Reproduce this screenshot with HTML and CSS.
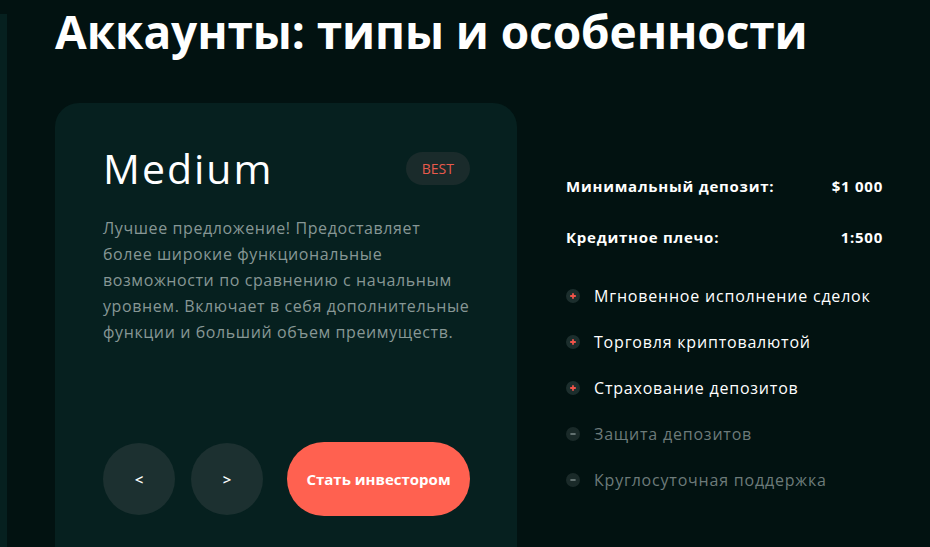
FILE: index.html
```html
<!DOCTYPE html>
<html lang="ru">
<head>
<meta charset="utf-8">
<title>Аккаунты</title>
<link rel="stylesheet" href="styles.css">
</head>
<body>
<div class="page">
  <div class="peek"></div>
  <main class="content">
    <h1 class="title">Аккаунты: типы и особенности</h1>
    <div class="row">
      <section class="card">
        <div class="card-head">
          <h2 class="card-name">Medium</h2>
          <span class="badge">BEST</span>
        </div>
        <p class="card-text">Лучшее предложение! Предоставляет<br>более широкие функциональные<br>возможности по сравнению с начальным<br>уровнем. Включает в себя дополнительные<br>функции и больший объем преимуществ.</p>
        <div class="card-actions">
          <button class="nav-btn">&lt;</button>
          <button class="nav-btn">&gt;</button>
          <button class="cta">Стать инвестором</button>
        </div>
      </section>
      <aside class="info">
        <div class="param"><span>Минимальный депозит:</span><span>$1 000</span></div>
        <div class="param"><span>Кредитное плечо:</span><span>1:500</span></div>
        <ul class="features">
          <li class="feat on"><span class="ico"><svg viewBox="0 0 14 14" width="14" height="14"><circle cx="7" cy="7" r="7" fill="#1c2e2d"/><path d="M7 4.2v5.6M4.2 7h5.6" stroke="#f0544a" stroke-width="1.8"/></svg></span>Мгновенное исполнение сделок</li>
          <li class="feat on"><span class="ico"><svg viewBox="0 0 14 14" width="14" height="14"><circle cx="7" cy="7" r="7" fill="#1c2e2d"/><path d="M7 4.2v5.6M4.2 7h5.6" stroke="#f0544a" stroke-width="1.8"/></svg></span>Торговля криптовалютой</li>
          <li class="feat on"><span class="ico"><svg viewBox="0 0 14 14" width="14" height="14"><circle cx="7" cy="7" r="7" fill="#1c2e2d"/><path d="M7 4.2v5.6M4.2 7h5.6" stroke="#f0544a" stroke-width="1.8"/></svg></span>Страхование депозитов</li>
          <li class="feat off"><span class="ico"><svg viewBox="0 0 14 14" width="14" height="14"><circle cx="7" cy="7" r="7" fill="#1a2a29"/><path d="M4.4 7h5.2" stroke="#6b7a79" stroke-width="1.8"/></svg></span>Защита депозитов</li>
          <li class="feat off"><span class="ico"><svg viewBox="0 0 14 14" width="14" height="14"><circle cx="7" cy="7" r="7" fill="#1a2a29"/><path d="M4.4 7h5.2" stroke="#6b7a79" stroke-width="1.8"/></svg></span>Круглосуточная поддержка</li>
        </ul>
      </aside>
    </div>
  </main>
</div>
</body>
</html>
```
FILE: styles.css
```css
* { box-sizing: border-box; }
html, body { margin: 0; padding: 0; }
body {
  background: #021211;
  font-family: "Open Sans", "Noto Sans", sans-serif;
  color: #ffffff;
  width: 930px;
  height: 547px;
  overflow: hidden;
}
.page {
  display: flex;
  height: 547px;
}
.peek {
  width: 7px;
  margin-top: 14px;
  background: #06201f;
  flex: none;
}
.content {
  margin-left: 48px;
  flex: 1;
}
.title {
  margin: 0;
  font-size: 46px;
  line-height: 63px;
  font-weight: 700;
  letter-spacing: -0.1px;
  white-space: nowrap;
}
.row {
  display: flex;
  margin-top: 40px;
}
.card {
  width: 462px;
  height: 470px;
  flex: none;
  background: #06201f;
  border-radius: 24px;
  padding: 43px 47px 0 48px;
}
.card-head {
  display: flex;
  justify-content: space-between;
  align-items: flex-start;
}
.card-name {
  margin: 0;
  font-size: 41px;
  line-height: 44px;
  font-weight: 400;
  letter-spacing: 2px;
}
.badge {
  margin-top: 6px;
  background: #1a2b2b;
  color: #e85a4c;
  font-size: 14px;
  line-height: 33px;
  height: 33px;
  padding: 0 16px;
  border-radius: 17px;
}
.card-text {
  margin: 25px 0 0;
  font-size: 16px;
  line-height: 26px;
  letter-spacing: 0.6px;
  color: #879795;
  white-space: nowrap;
}
.card-actions {
  display: flex;
  align-items: center;
  margin-top: 97px;
}
.nav-btn {
  width: 72px;
  height: 72px;
  border-radius: 50%;
  border: none;
  background: #1c3030;
  color: #ffffff;
  font-family: inherit;
  font-size: 15px;
  font-weight: 600;
  margin-right: 16px;
  padding: 0;
}
.cta {
  margin-left: 8px;
  width: 183px;
  height: 74px;
  border-radius: 37px;
  border: none;
  background: #ff6150;
  color: #ffffff;
  font-family: inherit;
  font-size: 15px;
  font-weight: 700;
  padding: 0;
}
.info {
  margin-left: 49px;
  width: 317px;
  padding-top: 72px;
  display: flex;
  flex-direction: column;
  gap: 29px;
}
.param {
  display: flex;
  justify-content: space-between;
  font-size: 15px;
  line-height: 22px;
  font-weight: 700;
  letter-spacing: 0.75px;
}
.features {
  list-style: none;
  margin: -4px 0 0;
  padding: 0;
}
.feat {
  display: flex;
  align-items: center;
  font-size: 16px;
  line-height: 22px;
  letter-spacing: 0.8px;
  height: 46px;
}
.feat.on { color: #ffffff; }
.feat.off { color: #6d7b7a; }
.ico {
  display: flex;
  width: 14px;
  height: 14px;
  margin-right: 14px;
  flex: none;
}
```
